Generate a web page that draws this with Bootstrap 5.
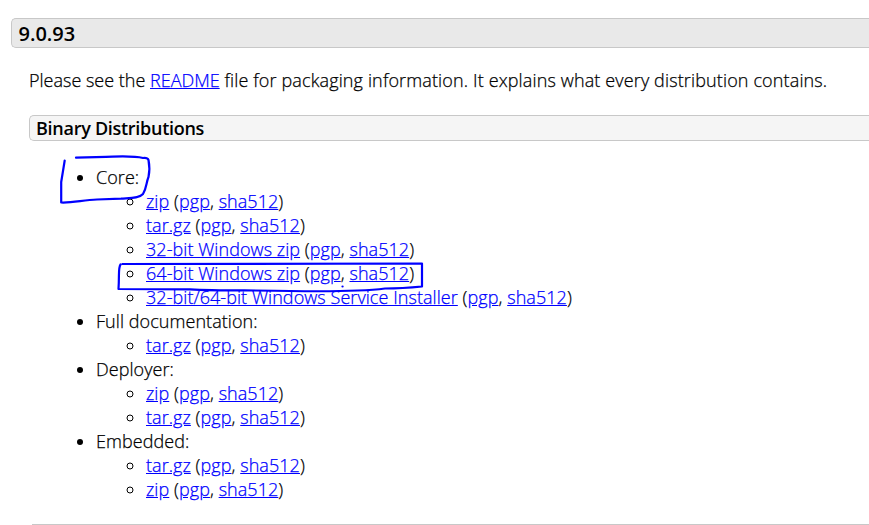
<!DOCTYPE html>
<html lang="en"><head><meta charset="utf-8"><title>Tomcat 9.0.93</title>
<link href="https://cdn.jsdelivr.net/npm/bootstrap@5.3.0/dist/css/bootstrap.min.css" rel="stylesheet">
<style>
body{font:300 18px/24px "Open Sans",sans-serif;color:#000;background:#fff;overflow:hidden;height:525px}
a{color:#00f}
.page-frame{height:525px}
.release{padding:18px 0 0 11px}
.release-title{font-size:20px;line-height:29px;font-weight:600;height:30px;background:#e9e9e9;border:1px solid #c8c8c8;border-right:0;border-radius:5px 0 0 5px;padding-left:6.5px;margin:0}
.release-body{padding:20px 0 0 18px}
.group-title{font-size:18px;line-height:24px;font-weight:600;letter-spacing:-.28px;height:26px;background:#f5f5f5;border:1px solid #c8c8c8;border-right:0;border-radius:5px 0 0 5px;padding-left:6px;margin:23px 0 0}
.intro,.files{-webkit-text-stroke:.25px currentColor}
.intro-rest{letter-spacing:.135px}
.files{padding-left:67px;margin:24px 0 0;letter-spacing:.06px}
.files ul{padding-left:50px;margin:0}
.next-group{height:1px;background:#c8c8c8;margin:23px 0 0 3px}
.pen{left:0;top:0;pointer-events:none;fill:none;stroke:#00f;stroke-width:2.2;stroke-linecap:round;stroke-linejoin:round}
</style></head>
<body>
<div class="page-frame position-relative overflow-hidden">
<main class="release">
<h3 class="release-title">9.0.93</h3>
<div class="release-body">
<p class="intro mb-0">Please see the <a href="#">README</a><span class="intro-rest"> file for packaging information. It explains what every distribution contains.</span></p>
<h4 class="group-title">Binary Distributions</h4>
<ul class="files">
<li>Core:<ul>
<li><a href="#">zip</a> (<a href="#">pgp</a>, <a href="#">sha512</a>)</li>
<li><a href="#">tar.gz</a> (<a href="#">pgp</a>, <a href="#">sha512</a>)</li>
<li><a href="#">32-bit Windows zip</a> (<a href="#">pgp</a>, <a href="#">sha512</a>)</li>
<li><a href="#">64-bit Windows zip</a> (<a href="#">pgp</a>, <a href="#">sha512</a>)</li>
<li><a href="#">32-bit/64-bit Windows Service Installer</a> (<a href="#">pgp</a>, <a href="#">sha512</a>)</li></ul></li>
<li>Full documentation:<ul>
<li><a href="#">tar.gz</a> (<a href="#">pgp</a>, <a href="#">sha512</a>)</li></ul></li>
<li>Deployer:<ul>
<li><a href="#">zip</a> (<a href="#">pgp</a>, <a href="#">sha512</a>)</li>
<li><a href="#">tar.gz</a> (<a href="#">pgp</a>, <a href="#">sha512</a>)</li></ul></li>
<li>Embedded:<ul>
<li><a href="#">tar.gz</a> (<a href="#">pgp</a>, <a href="#">sha512</a>)</li>
<li><a href="#">zip</a> (<a href="#">pgp</a>, <a href="#">sha512</a>)</li></ul></li>
</ul>
<div class="next-group"></div>
</div></main>
<!-- hand-drawn pen annotations -->
<svg class="pen position-absolute" width="869" height="525" viewBox="0 0 869 525" aria-hidden="true">
<path d="M64.700 160.500L63 171L61.200 182V202.500C73 203 83 200 97 199.500L121 198.700C130 198 139 198.500 143 194C147 187 146 183 148.500 177C150 170 149.500 165 148.500 160Q147.500 157.500 143 158C133 155.500 119 156.500 106 156.800L76 157.700"/>
<path d="M120.500 264.500C118 268 119.500 275 118.500 289L190 289.300C220 291 250 290 290 291C335 291.700 363 291.300 385 288.500Q402 288.500 422 286.500V263.500L122.500 264"/>
<path d="M342.500 286.500h.1"/>
</svg>
</div>
<script src="https://cdn.jsdelivr.net/npm/bootstrap@5.3.0/dist/js/bootstrap.bundle.min.js"></script>
</body></html>
